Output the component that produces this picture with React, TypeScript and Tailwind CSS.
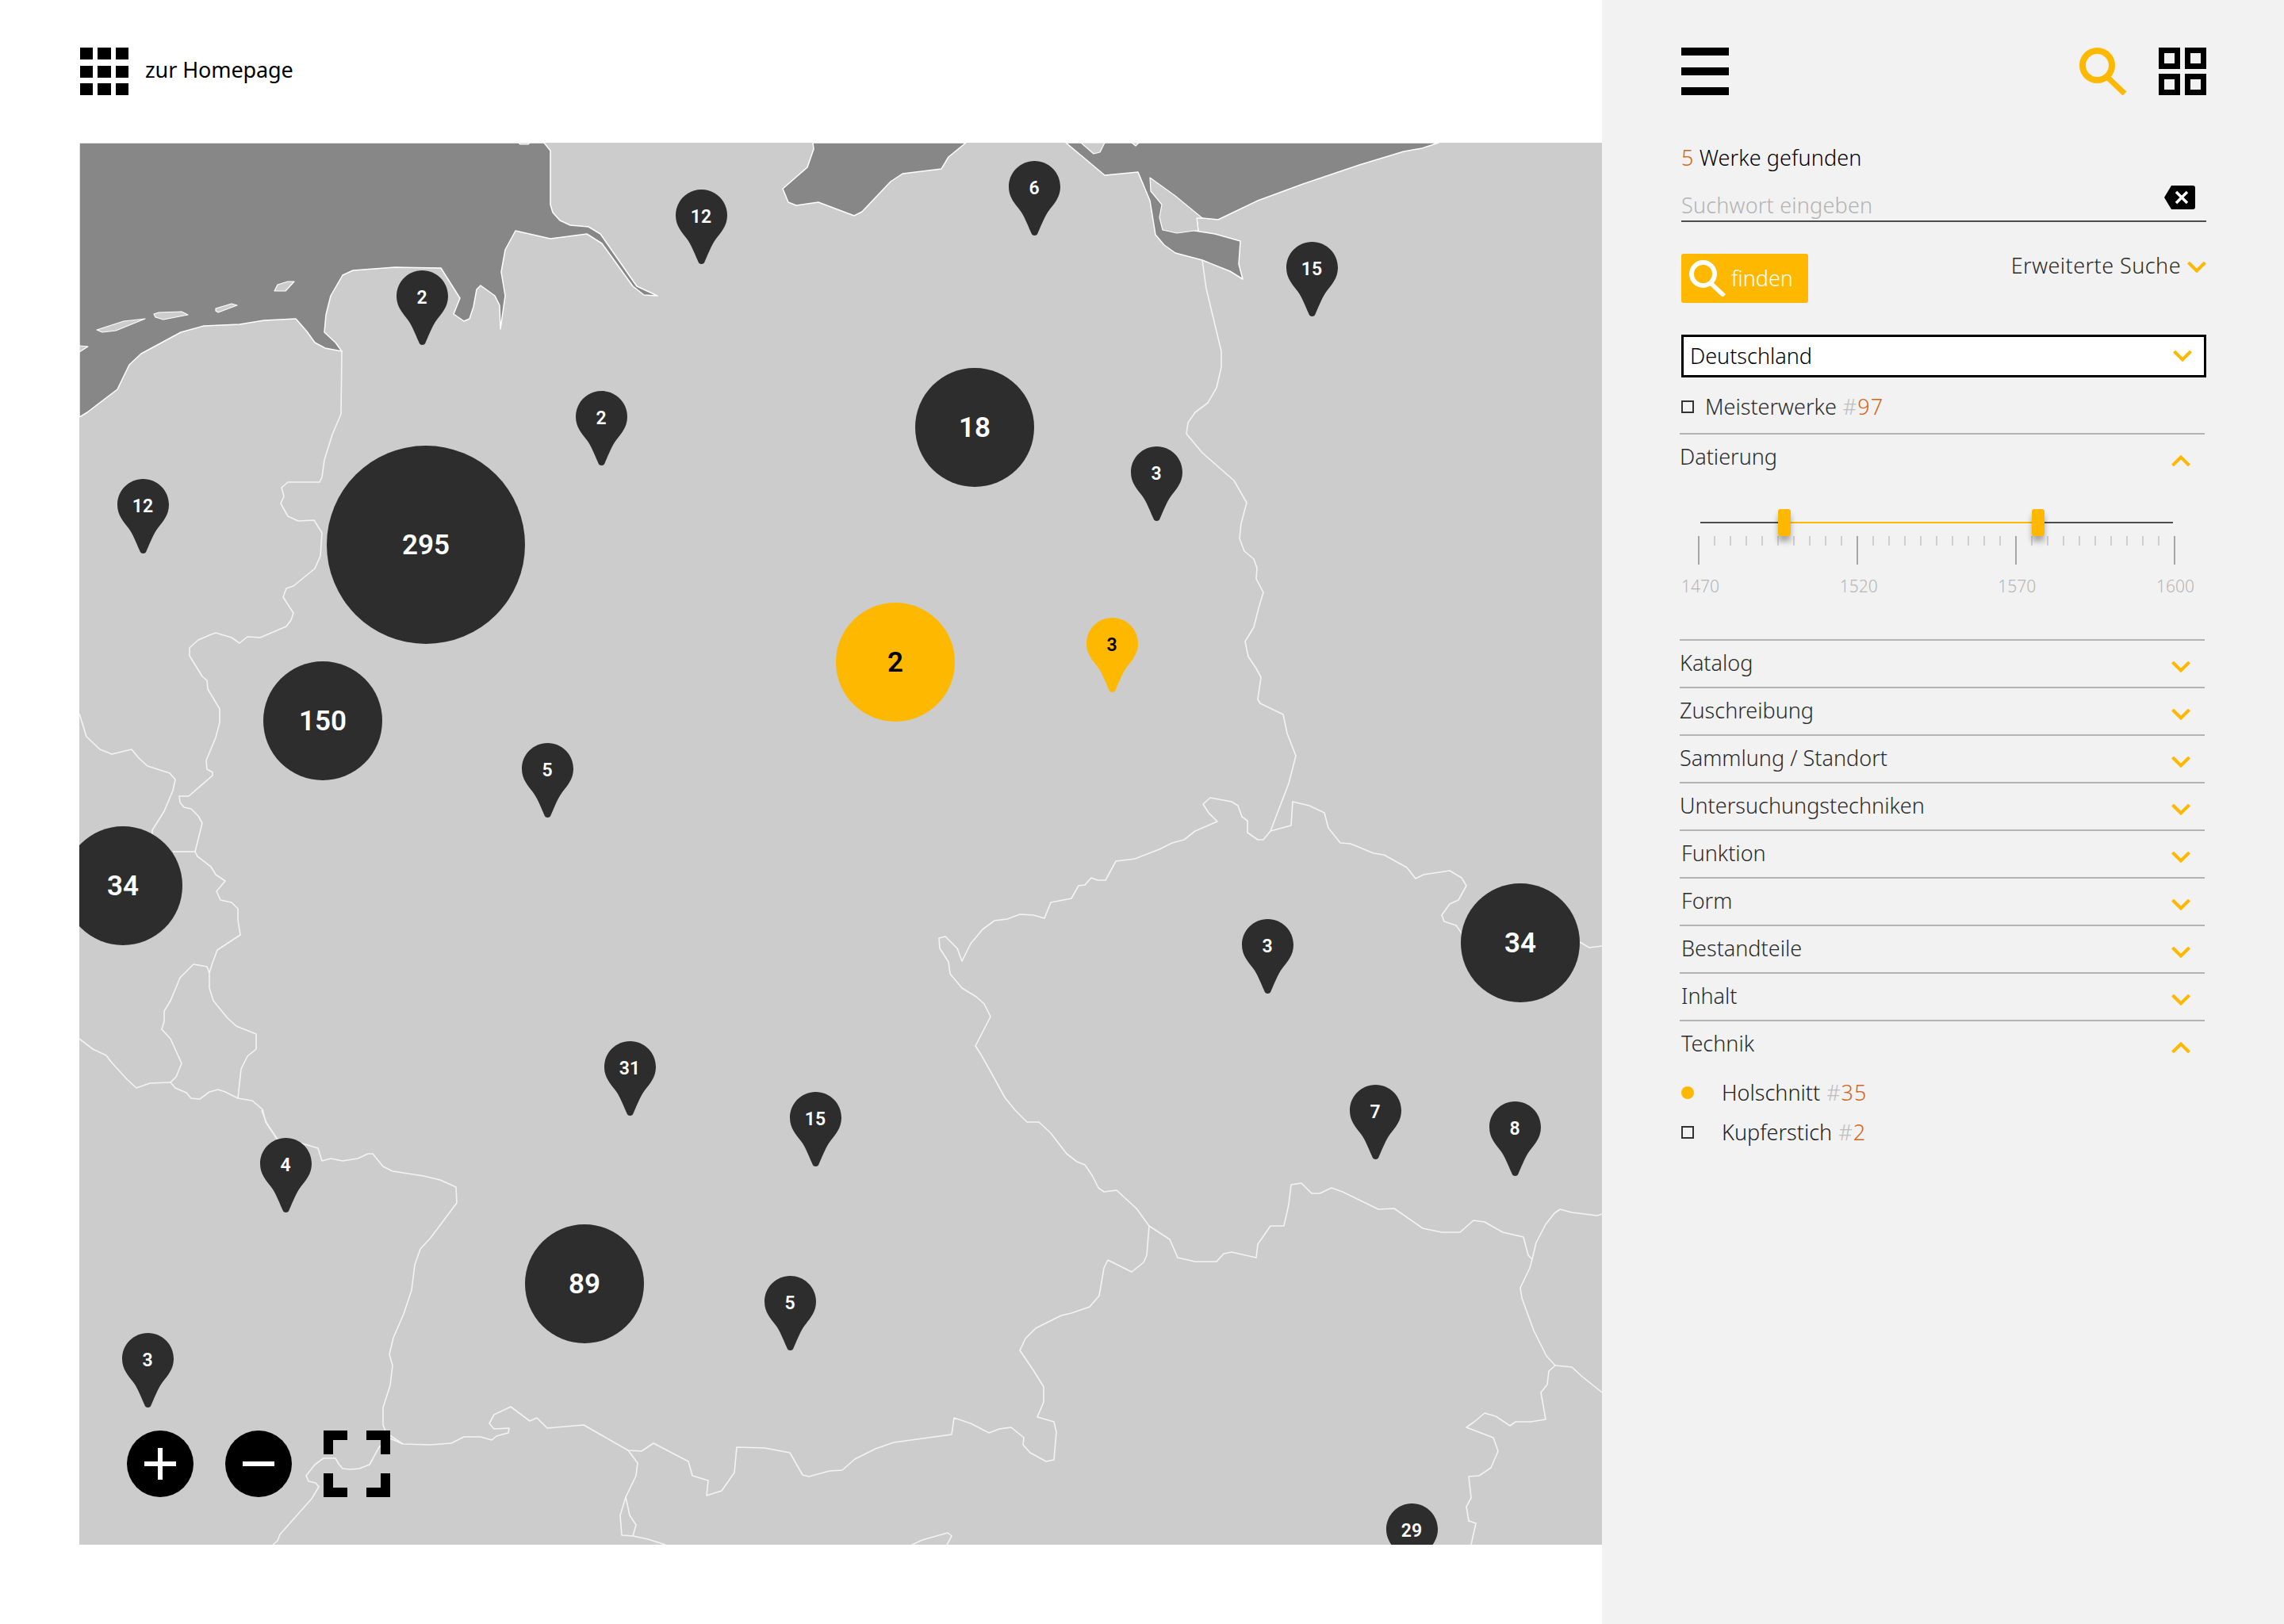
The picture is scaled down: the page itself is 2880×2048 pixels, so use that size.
const YELLOW = "#ffb800";

const pins = [
  { n: "12", x: 884, y: 273 },
  { n: "6", x: 1304, y: 237 },
  { n: "15", x: 1654, y: 339 },
  { n: "2", x: 532, y: 375 },
  { n: "2", x: 758, y: 527 },
  { n: "3", x: 1458, y: 597 },
  { n: "12", x: 180, y: 638 },
  { n: "3", x: 1402, y: 813, active: true },
  { n: "5", x: 690, y: 971 },
  { n: "3", x: 1598, y: 1193 },
  { n: "31", x: 794, y: 1347 },
  { n: "15", x: 1028, y: 1411 },
  { n: "7", x: 1734, y: 1402 },
  { n: "8", x: 1910, y: 1423 },
  { n: "4", x: 360, y: 1469 },
  { n: "5", x: 996, y: 1643 },
  { n: "3", x: 186, y: 1715 },
  { n: "29", x: 1780, y: 1930 },
];

const clusters = [
  { n: "295", x: 537, y: 687, d: 250 },
  { n: "18", x: 1229, y: 539, d: 150 },
  { n: "150", x: 407, y: 909, d: 150 },
  { n: "2", x: 1129, y: 835, d: 150, active: true },
  { n: "34", x: 155, y: 1117, d: 150 },
  { n: "34", x: 1917, y: 1189, d: 150 },
  { n: "89", x: 737, y: 1619, d: 150 },
];

const seas = [
  "100,180 686,180 694,190 694,258 697,268 706,278 719,284 742,286 757,295 803,361 829,373 812,372 798,361 759,307 740,295 694,301 650,291 637,315 632,343 637,373 631,415 630,385 624,373 606,360 601,365 597,387 592,402 585,405 572,396 580,376 556,338 498,337 445,341 432,347 417,373 411,397 409,419 423,432 431,443 410,439 397,432 387,418 373,402 333,404 302,409 257,411 228,419 178,446 163,460 148,491 110,520 100,526",
  "1025,180 1026,188 1018,211 987,238 994,255 1004,259 1032,255 1077,272 1087,267 1123,229 1138,219 1187,213 1196,198 1218,180",
  "1344,180 1393,221 1435,217 1450,253 1457,296 1468,309 1482,319 1516,328 1551,342 1567,352 1562,333 1564,304 1532,295 1506,291 1511,291 1509,275 1516,275 1536,277 1586,253 1643,232 1714,208 1770,191 1793,187 1814,180",
];

const islands = [
  "122,416 156,405 183,402 146,417 129,419",
  "194,396 200,394 229,393 237,397 206,403 196,400",
  "272,389 292,383 299,385 275,394 272,392",
  "350,359 363,355 371,355 360,367 346,367",
  "100,436 111,437 100,444",
  "1450,224 1482,247 1516,275 1509,275 1511,291 1506,291 1484,294 1466,290 1462,274 1465,258 1451,241",
  "1363,180 1379,194 1387,192 1393,180",
  "1427,180 1432,184 1436,180",
  "654,180 668,180 666,182 656,182",
];

const borders = [
  // Germany / Poland
  "1516,328 1521,364 1540,443 1540,463 1534,489 1523,508 1507,520 1498,533 1496,547 1516,571 1556,606 1572,634 1565,660 1563,679 1569,695 1581,705 1585,716 1584,730 1593,747 1587,767 1581,791 1570,809 1574,828 1584,843 1590,854 1586,882 1589,887 1618,901 1623,925 1634,953 1625,988 1602,1048",
  // Poland / Czechia
  "1602,1048 1628,1041 1630,1011 1651,1016 1670,1025 1675,1044 1690,1063 1703,1064 1732,1076 1745,1078 1774,1094 1785,1108 1795,1103 1828,1098 1843,1107 1849,1117 1839,1135 1828,1140 1818,1154 1821,1162 1836,1167 1844,1178 1992,1188 2004,1195 2020,1193",
  // Germany / Czechia
  "1602,1048 1593,1059 1586,1059 1573,1050 1573,1035 1566,1030 1561,1016 1553,1011 1526,1006 1517,1014 1524,1025 1535,1036 1507,1048 1493,1059 1478,1063 1462,1071 1431,1083 1407,1086 1394,1110 1384,1110 1376,1107 1368,1116 1360,1117 1351,1133 1325,1138 1317,1158 1303,1154 1286,1153 1270,1159 1254,1161 1239,1172 1224,1190 1213,1212 1207,1196 1192,1181 1184,1183 1185,1196 1196,1213 1198,1228 1213,1246 1231,1257 1241,1266 1249,1282 1230,1319 1237,1330 1250,1353 1267,1384 1280,1400 1295,1415 1310,1415 1325,1429 1345,1455 1358,1465 1368,1469 1377,1482 1385,1498 1392,1503 1408,1501 1433,1524 1449,1546",
  // Czechia / Austria
  "1449,1546 1475,1563 1485,1586 1507,1591 1534,1591 1543,1581 1553,1579 1584,1586 1586,1569 1602,1546 1619,1546 1625,1519 1628,1494 1641,1492 1654,1505 1664,1505 1679,1498 1693,1503 1738,1525 1758,1524 1794,1549 1818,1554 1841,1554 1858,1539 1872,1541 1895,1554 1921,1560 1927,1583 1932,1588",
  "1932,1588 1937,1567 1949,1544 1960,1530 1967,1525 1982,1529 2014,1533 2020,1531",
  // Austria / Hungary
  "1932,1588 1929,1599 1917,1624 1919,1637 1934,1678 1950,1710 1961,1722 1953,1729 1951,1746 1943,1756 1949,1790 1930,1793 1911,1793 1904,1798 1886,1786 1872,1782 1859,1793 1849,1800 1883,1813 1889,1830 1880,1851 1865,1861 1852,1862 1855,1889 1849,1900 1852,1918 1861,1921 1855,1948",
  "1961,1722 1982,1724 1995,1736 2020,1756",
  // Germany / Austria
  "1449,1546 1446,1583 1442,1592 1427,1604 1397,1589 1392,1599 1386,1634 1374,1648 1351,1656 1338,1659 1306,1675 1293,1688 1286,1703 1303,1728 1316,1749 1316,1768 1308,1787 1329,1793 1332,1806 1329,1841 1319,1843 1299,1832 1290,1822 1291,1813 1275,1800 1260,1802 1247,1807 1224,1795 1203,1788 1200,1809 1127,1819 1104,1827 1078,1840 1062,1854 1046,1855 1020,1862 1012,1860 996,1832 964,1826 929,1825 926,1857 910,1880 891,1886 893,1867 873,1861 868,1843 824,1820 809,1830 792,1829 736,1797 690,1801 677,1788 668,1792 644,1774 623,1784 617,1795 623,1802 642,1801 641,1807 626,1811 620,1816 606,1812 585,1812 569,1820 543,1822 508,1821 492,1814",
  // France / Germany
  "330,1400 336,1416 349,1436 381,1442 401,1448 406,1464 417,1461 432,1464 451,1461 464,1455 470,1455 483,1471 495,1477 534,1483 555,1488 575,1497 576,1517 543,1561 530,1575 523,1595 519,1627 509,1657 496,1687 491,1708 495,1722 492,1747 483,1775 483,1797 487,1807 508,1821",
  // France / Switzerland
  "492,1814 478,1825 466,1847 453,1852 442,1853 432,1852 427,1846 423,1839 408,1839 397,1847 386,1861 389,1868 398,1870 402,1875 393,1890 353,1935 350,1943 344,1948",
  // Switzerland / Italy
  "792,1829 804,1845 802,1861 789,1888 782,1911 784,1936 798,1937 817,1941 839,1948",
  "789,1888 794,1911 802,1923 798,1937",
  "1146,1950 1163,1942 1195,1933 1200,1937 1193,1950",
  // Netherlands / Germany and the western border
  "431,443 430,522 419,548 409,580 406,602 403,608 363,608 355,615 358,626 354,635 363,651 376,657 396,656 406,672 404,701 397,717 370,739 361,742 357,753 370,773 367,782 361,790 328,804 312,803 302,811 292,804 272,798 264,801 250,807 239,817 239,827 255,853 261,858 262,869 277,894 277,911 272,930 260,959 261,970 268,974 268,978 238,1004 226,1004 227,1012 232,1018 241,1020 250,1029 255,1038 246,1074 249,1080 266,1093 272,1103 284,1111 273,1124 278,1135 292,1138 300,1146 300,1160 303,1179 274,1198 268,1214 264,1227 264,1246 269,1262 287,1284 298,1294 323,1304 323,1323 312,1332 304,1348 300,1385 318,1388 331,1399 335,1415 350,1437",
  // Luxembourg
  "264,1227 261,1219 244,1216 227,1233 215,1262 207,1275 207,1288 204,1298 215,1310 229,1341 222,1358 215,1365 221,1372 235,1378 241,1385 252,1386 264,1377 275,1374 284,1377 300,1385",
  "215,1365 189,1366 172,1372 160,1361 140,1339 134,1331 117,1323 100,1310",
  // Belgium / Netherlands
  "100,900 109,929 126,945 141,951 166,945 175,956 186,966 214,975 221,983 218,997 207,1023 192,1047 192,1052",
  "218,1074 246,1074",
];

function MapShapes() {
  return (
    <svg className="absolute inset-0 block" width="1920" height="1768" viewBox="100 180 1920 1768" fill="none">
      {seas.map((p) => (
        <polygon key={p} points={p} fill="#878787" stroke="#fff" strokeWidth="1.5" strokeLinejoin="round" />
      ))}
      {islands.map((p) => (
        <polygon key={p} points={p} fill="#cccccc" stroke="#fff" strokeWidth="1.2" strokeLinejoin="round" />
      ))}
      {borders.map((p) => (
        <polyline key={p} points={p} stroke="#f4f4f4" strokeWidth="1.6" strokeLinejoin="round" />
      ))}
    </svg>
  );
}

function Pin({ n, x, y, active }: { n: string; x: number; y: number; active?: boolean }) {
  return (
    <div className="absolute h-[94px] w-[65px]" style={{ left: x - 132.5, top: y - 214 }}>
      <svg width="65" height="94" viewBox="0 0 65 94" className="block">
        <path
          d="M32.5 0C50.5 0 65 14.5 65 32.5C65 46 57 54 51 62C45 70 42 79 37 90C36 93 34.5 94 32.5 94C30.5 94 29 93 28 90C23 79 20 70 14 62C8 54 0 46 0 32.5C0 14.5 14.5 0 32.5 0Z"
          fill={active ? YELLOW : "#2d2d2d"}
        />
      </svg>
      <span
        className={`absolute top-0 left-0 flex h-[70px] w-[65px] items-center justify-center text-[23px] font-semibold ${active ? "text-black" : "text-white"}`}
      >
        {n}
      </span>
    </div>
  );
}

function Cluster({ n, x, y, d, active }: { n: string; x: number; y: number; d: number; active?: boolean }) {
  return (
    <div
      className={`absolute flex items-center justify-center rounded-full pt-[2px] text-[35px] font-semibold ${active ? "bg-[#ffb800] text-black" : "bg-[#2d2d2d] text-white"}`}
      style={{ left: x - 100 - d / 2, top: y - 180 - d / 2, width: d, height: d }}
    >
      {n}
    </div>
  );
}

function MapControls() {
  return (
    <div className="absolute top-[1624px] left-[60px] flex gap-10">
      <button className="flex h-[84px] w-[84px] items-center justify-center rounded-full bg-black">
        <svg width="40" height="40" viewBox="0 0 40 40" className="block">
          <path d="M0 20H40M20 0V40" stroke="#fff" strokeWidth="6" />
        </svg>
      </button>
      <button className="flex h-[84px] w-[84px] items-center justify-center rounded-full bg-black">
        <span className="block h-[6px] w-10 bg-white" />
      </button>
      <svg width="84" height="84" viewBox="0 0 84 84" className="block">
        <path d="M6 30V6H30M54 6H78V30M78 54V78H54M30 78H6V54" stroke="#000" strokeWidth="12" fill="none" />
      </svg>
    </div>
  );
}

function Chevron({ up, className }: { up?: boolean; className?: string }) {
  return (
    <svg width="24" height="14" viewBox="0 0 24 14" className={`block ${className ?? ""}`}>
      <path d={up ? "M1.5 13L12 2.5L22.5 13" : "M1.5 1L12 11.5L22.5 1"} stroke={YELLOW} strokeWidth="4" fill="none" />
    </svg>
  );
}

function Count({ n }: { n: string }) {
  return (
    <span className="tracking-[1px]">
      {" "}
      <span className="text-[#bdbdbd]">#</span>
      <span className="text-[#d4661c]">{n}</span>
    </span>
  );
}

function Row({ label, up, indent }: { label: string; up?: boolean; indent?: string }) {
  return (
    <div className="flex h-[60px] w-[662px] items-start justify-between border-t-2 border-[#b3b3b3] pr-[18px] text-[#2b2b2b]">
      <span className={`mt-[10px] leading-[36px] ${indent ?? ""}`}>{label}</span>
      <Chevron up={up} className="mt-[26px]" />
    </div>
  );
}

function DateSlider() {
  const ticks = Array.from({ length: 31 }, (_, i) => i);
  return (
    <div className="ml-[2px] w-[662px]">
      <div className="ml-[24px] flex w-[596px] items-center">
        <div className="h-[2px] flex-1 bg-[#4d4d4d]" />
        <div className="relative z-10 h-[34px] w-4 rounded-[3px] bg-[#ffb800] shadow-[0_7px_7px_rgba(0,0,0,0.3)]" />
        <div className="h-[2px] w-[304px] bg-[#ffb800]" />
        <div className="relative z-10 h-[34px] w-4 rounded-[3px] bg-[#ffb800] shadow-[0_7px_7px_rgba(0,0,0,0.3)]" />
        <div className="h-[2px] w-[162px] bg-[#4d4d4d]" />
      </div>
      <div className="ml-[21px] flex w-[602px] items-start justify-between">
        {ticks.map((i) =>
          i % 10 === 0 ? (
            <span key={i} className="block h-9 w-[2px] bg-[#a6a6a6]" />
          ) : (
            <span key={i} className="block h-3 w-[2px] bg-[#cfcfcf]" />
          ),
        )}
      </div>
      <div className="mt-[12px] flex w-[647px] justify-between text-[21px] leading-[30px] font-light text-[#b5b5b5]">
        <span>1470</span>
        <span>1520</span>
        <span>1570</span>
        <span>1600</span>
      </div>
    </div>
  );
}

function Sidebar() {
  return (
    <aside className="flex min-h-[2048px] w-[860px] flex-col bg-[#f2f2f2] pt-[60px] pr-[98px] pl-[100px] font-['Noto_Sans',sans-serif] text-[27px] font-light">
      <div className="flex h-[60px] items-start justify-between">
        <div className="flex h-[60px] w-[60px] flex-col justify-between">
          <span className="block h-[10px] bg-black" />
          <span className="block h-[10px] bg-black" />
          <span className="block h-[10px] bg-black" />
        </div>
        <div className="flex gap-10">
          <svg width="60" height="60" viewBox="0 0 60 60" className="block">
            <circle cx="22.5" cy="22.5" r="18.5" fill="none" stroke={YELLOW} strokeWidth="8" />
            <path d="M36 38L57 58" stroke={YELLOW} strokeWidth="7" />
          </svg>
          <svg width="60" height="60" viewBox="0 0 60 60" className="block">
            <path d="M3.5 3.5H23.5V23.5H3.5ZM36.5 3.5H56.5V23.5H36.5ZM3.5 36.5H23.5V56.5H3.5ZM36.5 36.5H56.5V56.5H36.5Z" fill="none" stroke="#000" strokeWidth="7" />
          </svg>
        </div>
      </div>

      <p className="mt-[60px] leading-[38px] tracking-[0.1px] text-black">
        <span className="text-[#d4661c]">5</span> Werke gefunden
      </p>

      <div className="mt-[10px] flex h-[52px] items-start justify-between border-b-2 border-[#4d4d4d]">
        <span className="mt-[13px] leading-[36px] tracking-[0.2px] text-[#b3b3b3]">Suchwort eingeben</span>
        <svg width="39" height="30" viewBox="0 0 39 30" className="mt-[6px] mr-[14px] block">
          <path d="M9 0H36A3 3 0 0 1 39 3V27A3 3 0 0 1 36 30H9L0 15Z" fill="#000" />
          <path d="M15 8L29 22M29 8L15 22" stroke="#fff" strokeWidth="3.5" />
        </svg>
      </div>

      <div className="mt-[40px] flex items-start justify-between">
        <button className="flex h-[62px] w-[160px] items-center rounded-[3px] bg-[#ffb800] pl-[10px] text-white">
          <svg width="46" height="46" viewBox="0 0 46 46" className="block">
            <circle cx="17.5" cy="17.5" r="14.5" fill="none" stroke="#fff" strokeWidth="6" />
            <path d="M28 30L44 45" stroke="#fff" strokeWidth="5.5" />
          </svg>
          <span className="ml-[7px]">finden</span>
        </button>
        <div className="-mt-[3px] flex items-center text-[#2b2b2b]">
          <span className="leading-[36px] tracking-[0.45px]">Erweiterte Suche</span>
          <Chevron className="mt-[4px] ml-2" />
        </div>
      </div>

      <div className="mt-[40px] flex h-[54px] items-center justify-between border-[3px] border-black bg-white pr-[15px] pl-2 text-black">
        <span className="leading-[36px]">Deutschland</span>
        <Chevron />
      </div>

      <div className="mt-[19px] flex h-[36px] items-center text-[#2b2b2b]">
        <span className="block h-4 w-4 border-[2.5px] border-[#333]" />
        <span className="ml-[14px]">
          Meisterwerke
          <Count n="97" />
        </span>
      </div>

      <div className="mt-[15px] -ml-[2px] flex flex-col">
        <div className="h-[260px] w-[662px]">
          <Row label="Datierung" up />
          <div className="h-[36px]" />
          <DateSlider />
        </div>
        <Row label="Katalog" />
        <Row label="Zuschreibung" />
        <Row label="Sammlung / Standort" />
        <Row label="Untersuchungstechniken" />
        <Row label="Funktion" indent="ml-[2px]" />
        <Row label="Form" indent="ml-[2px]" />
        <Row label="Bestandteile" indent="ml-[2px]" />
        <Row label="Inhalt" indent="ml-[2px]" />
        <Row label="Technik" up indent="ml-[2px]" />
      </div>

      <div className="mt-[14px] flex flex-col gap-[14px] text-[#222]">
        <div className="flex h-[36px] items-center">
          <span className="block h-4 w-4 rounded-full bg-[#ffb800]" />
          <span className="ml-[35px]">
            Holschnitt
            <Count n="35" />
          </span>
        </div>
        <div className="flex h-[36px] items-center">
          <span className="block h-4 w-4 border-[2.5px] border-[#333]" />
          <span className="ml-[35px]">
            Kupferstich
            <Count n="2" />
          </span>
        </div>
      </div>
    </aside>
  );
}

export default function App() {
  return (
    <div className="flex min-h-[2048px] w-[2880px] bg-white font-['Roboto',sans-serif]">
      <main className="w-[2020px]">
        <header className="flex h-[180px] items-start pt-[60px] pl-[101px]">
          <div className="grid w-[61px] grid-cols-3 gap-x-[6px] gap-y-[7.5px]">
            {Array.from({ length: 9 }, (_, i) => (
              <span key={i} className="block h-[15px] bg-black" />
            ))}
          </div>
          <a className="mt-[10px] ml-[21px] font-['Noto_Sans',sans-serif] text-[27px] leading-[36px] tracking-[-0.1px] text-black">zur Homepage</a>
        </header>
        <section className="relative ml-[100px] h-[1768px] w-[1920px] overflow-hidden bg-[#cccccc]">
          <MapShapes />
          {clusters.map((c) => (
            <Cluster key={`${c.n}-${c.x}`} {...c} />
          ))}
          {pins.map((p) => (
            <Pin key={`${p.n}-${p.x}`} {...p} />
          ))}
          <MapControls />
        </section>
      </main>
      <Sidebar />
    </div>
  );
}
